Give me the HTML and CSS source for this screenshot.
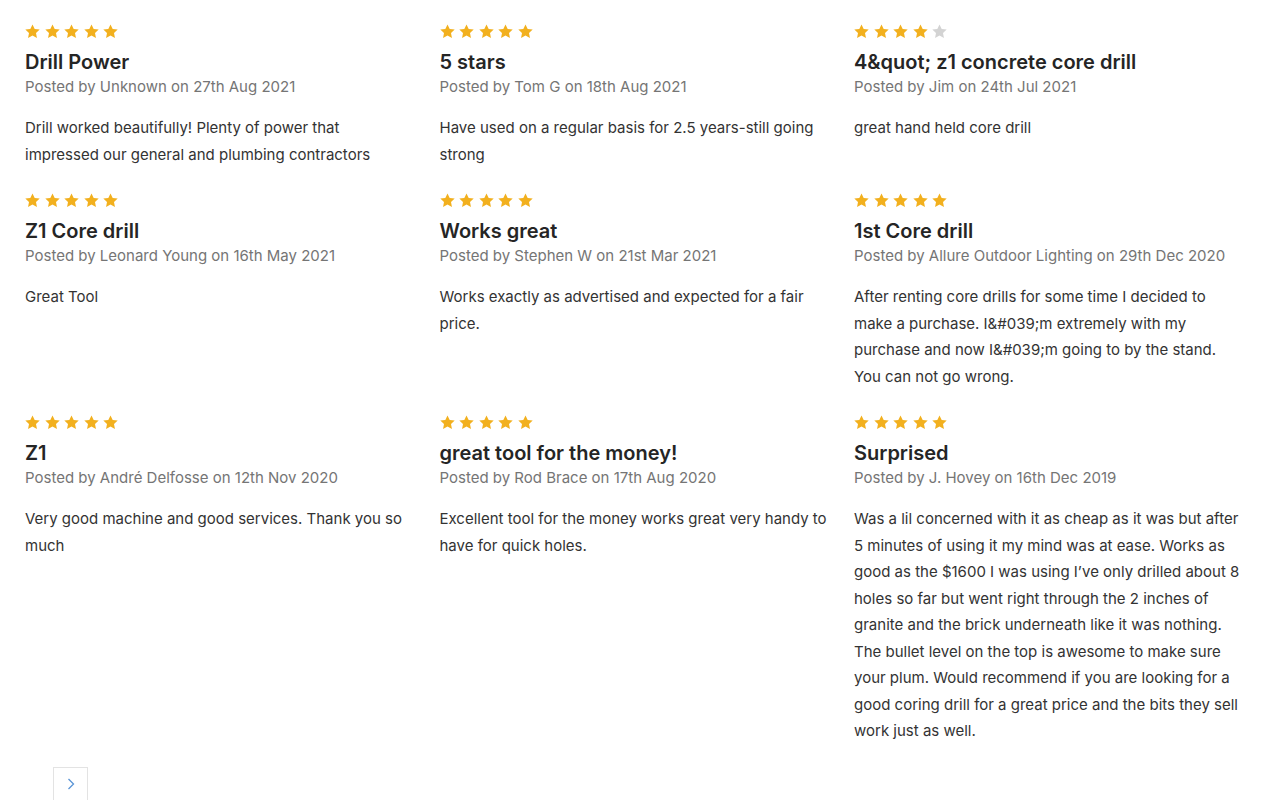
FILE: index.html
```html
<!DOCTYPE html>
<html>
<head>
<meta charset="utf-8">
<link rel="stylesheet" href="styles.css">
</head>
<body>
<svg width="0" height="0" class="defs">
  <defs>
    <symbol id="star" viewBox="0 0 24 24">
      <path d="M12 0.6l3.5 7.3 8 1-5.9 5.5 1.5 7.9L12 18.4l-7.1 3.9 1.5-7.9L0.5 8.9l8-1z"/>
    </symbol>
  </defs>
</svg>
<div class="reviews">
  <div class="review">
    <div class="stars"><svg class="s on"><use href="#star"/></svg><svg class="s on"><use href="#star"/></svg><svg class="s on"><use href="#star"/></svg><svg class="s on"><use href="#star"/></svg><svg class="s on"><use href="#star"/></svg></div>
    <h3 class="title">Drill Power</h3>
    <p class="meta">Posted by Unknown on 27th Aug 2021</p>
    <p class="body">Drill worked beautifully! Plenty of power that impressed our general and plumbing contractors</p>
  </div>
  <div class="review">
    <div class="stars"><svg class="s on"><use href="#star"/></svg><svg class="s on"><use href="#star"/></svg><svg class="s on"><use href="#star"/></svg><svg class="s on"><use href="#star"/></svg><svg class="s on"><use href="#star"/></svg></div>
    <h3 class="title">5 stars</h3>
    <p class="meta">Posted by Tom G on 18th Aug 2021</p>
    <p class="body">Have used on a regular basis for 2.5 years-still going strong</p>
  </div>
  <div class="review">
    <div class="stars"><svg class="s on"><use href="#star"/></svg><svg class="s on"><use href="#star"/></svg><svg class="s on"><use href="#star"/></svg><svg class="s on"><use href="#star"/></svg><svg class="s off"><use href="#star"/></svg></div>
    <h3 class="title">4&amp;quot; z1 concrete core drill</h3>
    <p class="meta">Posted by Jim on 24th Jul 2021</p>
    <p class="body">great hand held core drill</p>
  </div>
  <div class="review">
    <div class="stars"><svg class="s on"><use href="#star"/></svg><svg class="s on"><use href="#star"/></svg><svg class="s on"><use href="#star"/></svg><svg class="s on"><use href="#star"/></svg><svg class="s on"><use href="#star"/></svg></div>
    <h3 class="title">Z1 Core drill</h3>
    <p class="meta">Posted by Leonard Young on 16th May 2021</p>
    <p class="body">Great Tool</p>
  </div>
  <div class="review">
    <div class="stars"><svg class="s on"><use href="#star"/></svg><svg class="s on"><use href="#star"/></svg><svg class="s on"><use href="#star"/></svg><svg class="s on"><use href="#star"/></svg><svg class="s on"><use href="#star"/></svg></div>
    <h3 class="title">Works great</h3>
    <p class="meta">Posted by Stephen W on 21st Mar 2021</p>
    <p class="body">Works exactly as advertised and expected for a fair price.</p>
  </div>
  <div class="review">
    <div class="stars"><svg class="s on"><use href="#star"/></svg><svg class="s on"><use href="#star"/></svg><svg class="s on"><use href="#star"/></svg><svg class="s on"><use href="#star"/></svg><svg class="s on"><use href="#star"/></svg></div>
    <h3 class="title">1st Core drill</h3>
    <p class="meta">Posted by Allure Outdoor Lighting on 29th Dec 2020</p>
    <p class="body">After renting core drills for some time I decided to make a purchase. I&amp;#039;m extremely with my purchase and now I&amp;#039;m going to by the stand. You can not go wrong.</p>
  </div>
  <div class="review">
    <div class="stars"><svg class="s on"><use href="#star"/></svg><svg class="s on"><use href="#star"/></svg><svg class="s on"><use href="#star"/></svg><svg class="s on"><use href="#star"/></svg><svg class="s on"><use href="#star"/></svg></div>
    <h3 class="title">Z1</h3>
    <p class="meta">Posted by André Delfosse on 12th Nov 2020</p>
    <p class="body">Very good machine and good services. Thank you so much</p>
  </div>
  <div class="review">
    <div class="stars"><svg class="s on"><use href="#star"/></svg><svg class="s on"><use href="#star"/></svg><svg class="s on"><use href="#star"/></svg><svg class="s on"><use href="#star"/></svg><svg class="s on"><use href="#star"/></svg></div>
    <h3 class="title">great tool for the money!</h3>
    <p class="meta">Posted by Rod Brace on 17th Aug 2020</p>
    <p class="body">Excellent tool for the money works great very handy to have for quick holes.</p>
  </div>
  <div class="review">
    <div class="stars"><svg class="s on"><use href="#star"/></svg><svg class="s on"><use href="#star"/></svg><svg class="s on"><use href="#star"/></svg><svg class="s on"><use href="#star"/></svg><svg class="s on"><use href="#star"/></svg></div>
    <h3 class="title">Surprised</h3>
    <p class="meta">Posted by J. Hovey on 16th Dec 2019</p>
    <p class="body">Was a lil concerned with it as cheap as it was but after 5 minutes of using it my mind was at ease. Works as good as the $1600 I was using I’ve only drilled about 8 holes so far but went right through the 2 inches of granite and the brick underneath like it was nothing. The bullet level on the top is awesome to make sure your plum. Would recommend if you are looking for a good coring drill for a great price and the bits they sell work just as well.</p>
  </div>
</div>
<nav class="pager">
  <a class="pager-next" href="#" aria-label="Next">
    <svg viewBox="0 0 14 14" width="14" height="14"><path d="M4.5 2l5 5-5 5" fill="none" stroke="#5a95d6" stroke-width="1.3"/></svg>
  </a>
</nav>
</body>
</html>
```
FILE: styles.css
```css
html, body {
  margin: 0;
  padding: 0;
  background: #fff;
}
body {
  font-family: "Inter", "Open Sans", sans-serif;
  color: #333;
}
.defs {
  position: absolute;
  width: 0;
  height: 0;
}
.reviews {
  display: grid;
  grid-template-columns: 414.5px 414.5px 414.5px;
  row-gap: 25px;
  padding: 24px 0 0 25px;
}
.review {
  padding-right: 24px;
}
.stars {
  display: flex;
  gap: 4.5px;
  height: 15px;
}
.s {
  width: 15px;
  height: 15px;
}
.s.on { fill: #f2b01e; }
.s.off { fill: #d3d3d3; }
.title {
  margin: 10px 0 0;
  font-size: 20px;
  line-height: 26px;
  font-weight: 600;
  color: #252525;
}
.meta {
  margin: 1px 0 0;
  font-size: 15px;
  line-height: 22px;
  color: #757575;
}
.body {
  margin: 17px 0 0;
  font-size: 15px;
  line-height: 26.5px;
  color: #333;
}
.pager {
  padding: 22px 0 0 53px;
}
.pager-next {
  display: flex;
  align-items: center;
  justify-content: center;
  width: 33px;
  height: 33px;
  border: 1px solid #e3e3e3;
}
```
